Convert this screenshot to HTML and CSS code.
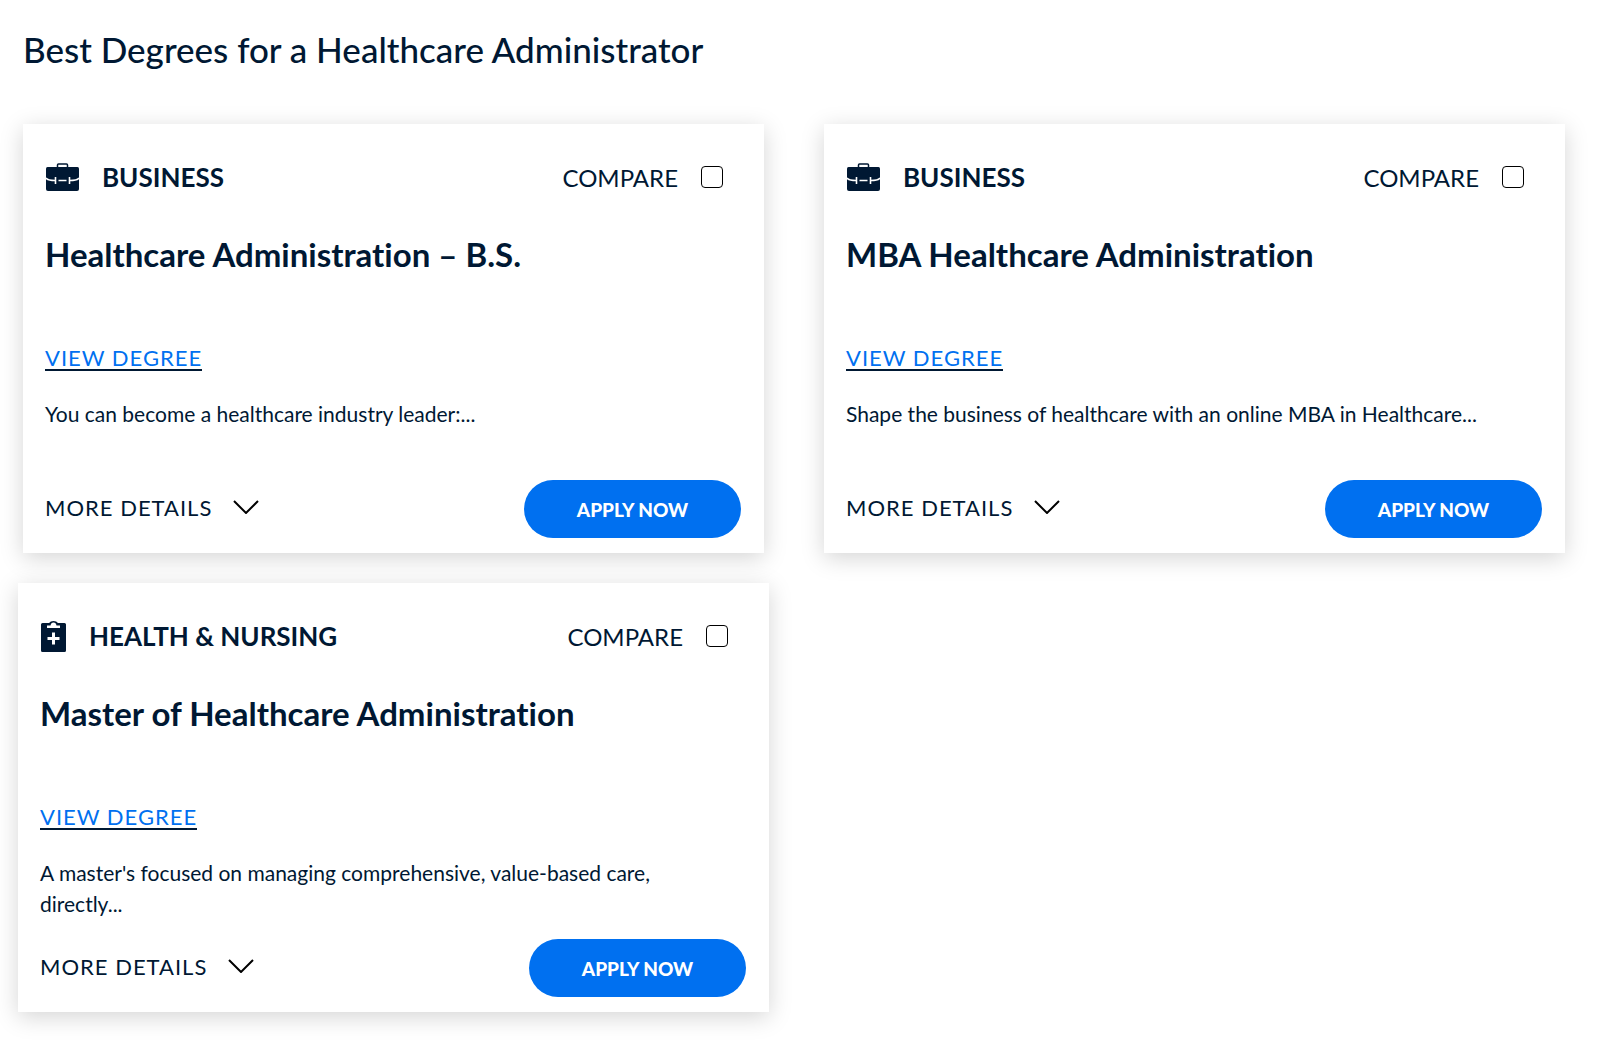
FILE: index.html
```html
<!DOCTYPE html>
<html lang="en">
<head>
  <meta charset="UTF-8" />
  <meta name="viewport" content="width=device-width, initial-scale=1.0"/>
  <title>Best Degrees for a Healthcare Administrator</title>
  <link rel="stylesheet" href="styles.css">
</head>
<body>
  <main>
    <h1>Best Degrees for a Healthcare Administrator</h1>

    <div class="degrees">
      <article class="card">
        <div class="card-top">
          <svg class="icon-business" viewBox="0 0 33 28" aria-hidden="true">
            <path fill="#001833" d="M1.500 4H31.500Q33 4 33 5.500V26Q33 28 31 28H2Q0 28 0 26V5.500Q0 4 1.500 4Z"/>
            <path stroke="#001833" stroke-width="1.500" fill="none" d="M11.500 5V2Q11.500 1 12.500 1H20.500Q21.500 1 21.500 2V5"/>
            <path stroke="#fff" stroke-width="1.600" fill="none" d="M0 15Q2 17.500 9 17.500M9.500 14V21M12.500 17.500H20.500M23.500 14V21M24 17.500Q31 17.500 33 15"/>
          </svg>
          <span class="category">BUSINESS</span>
          <label class="compare" for="compare1">COMPARE <input type="checkbox" id="compare1" /></label>
        </div>
        <h2>Healthcare Administration – B.S.</h2>
        <a class="view" href="#">VIEW DEGREE</a>
        <p>You can become a healthcare industry leader:...</p>
        <div class="card-bottom">
          <button class="details" type="button">MORE DETAILS
            <svg class="chevron" viewBox="0 0 26 14" aria-hidden="true"><path d="M1 1L13 13L25 1"/></svg>
          </button>
          <button class="apply" type="button">APPLY NOW</button>
        </div>
      </article>

      <article class="card">
        <div class="card-top">
          <svg class="icon-business" viewBox="0 0 33 28" aria-hidden="true">
            <path fill="#001833" d="M1.500 4H31.500Q33 4 33 5.500V26Q33 28 31 28H2Q0 28 0 26V5.500Q0 4 1.500 4Z"/>
            <path stroke="#001833" stroke-width="1.500" fill="none" d="M11.500 5V2Q11.500 1 12.500 1H20.500Q21.500 1 21.500 2V5"/>
            <path stroke="#fff" stroke-width="1.600" fill="none" d="M0 15Q2 17.500 9 17.500M9.500 14V21M12.500 17.500H20.500M23.500 14V21M24 17.500Q31 17.500 33 15"/>
          </svg>
          <span class="category">BUSINESS</span>
          <label class="compare" for="compare2">COMPARE <input type="checkbox" id="compare2" /></label>
        </div>
        <h2>MBA Healthcare Administration</h2>
        <a class="view" href="#">VIEW DEGREE</a>
        <p>Shape the business of healthcare with an online MBA in Healthcare...</p>
        <div class="card-bottom">
          <button class="details" type="button">MORE DETAILS
            <svg class="chevron" viewBox="0 0 26 14" aria-hidden="true"><path d="M1 1L13 13L25 1"/></svg>
          </button>
          <button class="apply" type="button">APPLY NOW</button>
        </div>
      </article>

      <article class="card card-wide">
        <div class="card-top">
          <svg class="icon-health" viewBox="0 0 25 31" aria-hidden="true">
            <path fill="#001833" d="M1.500 2H8Q9.500 0 12.500 0Q15.500 0 17 2H23.500Q25 2 25 3.500V29.500Q25 31 23.500 31H1.500Q0 31 0 29.500V3.500Q0 2 1.500 2Z"/>
            <path fill="#fff" d="M6 7V4.500H9.500Q10 1.500 12.500 1.500Q15 1.500 15.500 4.500H19V7ZM11 11.500H14V16H18.500V19H14V23.500H11V19H6.500V16H11Z"/>
          </svg>
          <span class="category">HEALTH &amp; NURSING</span>
          <label class="compare" for="compare3">COMPARE <input type="checkbox" id="compare3" /></label>
        </div>
        <h2>Master of Healthcare Administration</h2>
        <a class="view" href="#">VIEW DEGREE</a>
        <p>A master's focused on managing comprehensive, value-based care, directly...</p>
        <div class="card-bottom">
          <button class="details" type="button">MORE DETAILS
            <svg class="chevron" viewBox="0 0 26 14" aria-hidden="true"><path d="M1 1L13 13L25 1"/></svg>
          </button>
          <button class="apply" type="button">APPLY NOW</button>
        </div>
      </article>
    </div>
  </main>
</body>
</html>
```
FILE: styles.css
```css
* {
  box-sizing: border-box;
}

body {
  margin: 0;
  font-family: Lato, sans-serif;
  font-variant-ligatures: none;
  background-color: #fff;
  color: #001833;
}

main {
  padding: 25px 39px 40px 23px;
}

h1 {
  margin: 0 0 51px;
  font-size: 35px;
  line-height: 48px;
  font-weight: 500;
}

.degrees {
  display: grid;
  grid-template-columns: 1fr 1fr;
  gap: 30px 60px;
}

.card {
  display: flex;
  flex-direction: column;
  align-items: flex-start;
  padding: 35px 23px 15px 22px;
  background: #fff;
  box-shadow: 0 5px 22px rgba(0, 0, 0, 0.17);
}

.card-wide {
  margin: 0 -5px;
}

.card-top {
  display: flex;
  align-items: center;
  width: 100%;
  height: 36px;
  padding-left: 1px;
}

.icon-business {
  width: 33px;
  height: 28px;
}

.icon-health {
  width: 25px;
  height: 31px;
}

.category {
  margin-left: 23px;
  font-size: 26px;
  font-weight: bold;
}

.compare {
  display: flex;
  align-items: center;
  gap: 23px;
  margin-left: auto;
  margin-right: 18px;
  font-size: 24px;
}

.compare input {
  appearance: none;
  width: 22px;
  height: 22px;
  margin: 0;
  border: 1px solid #000;
  border-radius: 4px;
}

.compare input:checked {
  background: #0070f0;
}

h2 {
  margin: 39px 0 72px;
  font-size: 33px;
  line-height: 40px;
}

.view {
  border-bottom: 2px solid #001833;
  font-size: 22px;
  line-height: 23px;
  letter-spacing: 1px;
  color: #0070f0;
  text-decoration: none;
}

p {
  min-height: 62px;
  margin: 27px 0 20px;
  padding-right: 24px;
  font-size: 21px;
  line-height: 31px;
}

.card-bottom {
  display: flex;
  align-items: center;
  justify-content: space-between;
  width: 100%;
}

button {
  border: none;
  font-family: inherit;
  cursor: pointer;
}

.details {
  display: flex;
  align-items: center;
  gap: 21px;
  padding: 0 0 4px;
  background: none;
  color: #001833;
  font-size: 22px;
  letter-spacing: 1px;
}

.chevron {
  width: 26px;
  height: 14px;
  fill: none;
  stroke: #000;
  stroke-width: 2;
}

.apply {
  width: 217px;
  height: 58px;
  border-radius: 29px;
  background: #0070f0;
  color: #fff;
  font-size: 19px;
  font-weight: 900;
}

@media (max-width: 1100px) {
  .degrees {
    grid-template-columns: 1fr;
  }
}
```
